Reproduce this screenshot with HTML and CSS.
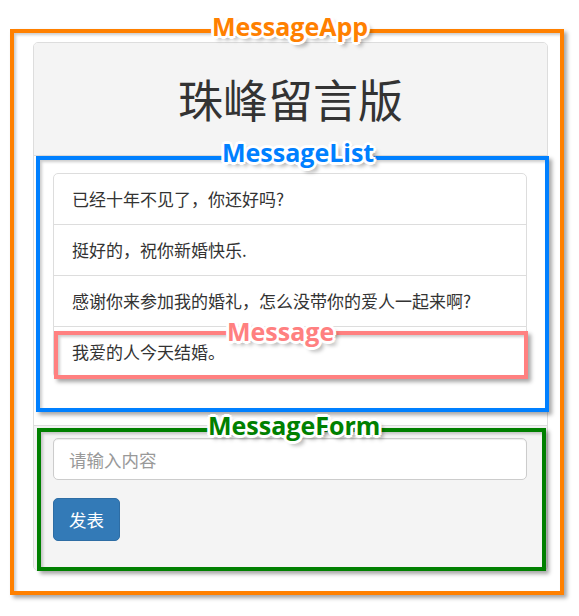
FILE: index.html
```html
<!DOCTYPE html>
<html>
<head>
    <meta charset="utf-8">
    <title>珠峰留言版</title>
    <link rel="stylesheet" href="styles.css">
</head>
<body>
    <div class="stage">
        <div class="panel">
            <div class="panel-heading">
                <h1>珠峰留言版</h1>
            </div>
            <div class="panel-body">
                <ul class="list-group">
                    <li class="list-group-item">已经十年不见了，你还好吗?</li>
                    <li class="list-group-item">挺好的，祝你新婚快乐.</li>
                    <li class="list-group-item">感谢你来参加我的婚礼，怎么没带你的爱人一起来啊?</li>
                    <li class="list-group-item">我爱的人今天结婚。</li>
                </ul>
            </div>
            <div class="panel-footer">
                <form>
                    <div class="form-group">
                        <input type="text" class="form-control" placeholder="请输入内容">
                    </div>
                    <button type="button" class="btn">发表</button>
                </form>
            </div>
        </div>

        <!-- component annotations drawn over the app -->
        <div class="note note-app"></div>
        <div class="note note-list"></div>
        <div class="note note-item"></div>
        <div class="note note-form"></div>

        <span class="note-label label-app">MessageApp</span>
        <span class="note-label label-list">MessageList</span>
        <span class="note-label label-item">Message</span>
        <span class="note-label label-form">MessageForm</span>
    </div>
</body>
</html>
```

FILE: styles.css
```css
* {
    box-sizing: border-box;
}
body {
    margin: 0;
    background: #fff;
    font-family: "Noto Sans CJK SC", "Noto Sans", sans-serif;
    color: #333;
}
.stage {
    position: relative;
    width: 579px;
    height: 616px;
    padding: 42px 31px 0 33px;
}
.panel {
    width: 515px;
    border: 1px solid #ddd;
    border-radius: 5px;
    background: #fff;
    overflow: hidden;
}
.panel-heading {
    background: #f4f4f4;
    border-bottom: 1px solid #ddd;
    padding: 31px 0 31px;
}
.panel-heading h1 {
    margin: 0;
    text-align: center;
    font-size: 45px;
    font-weight: 400;
    line-height: 50px;
    color: #333;
}
.panel-body {
    padding: 17px 20px 20px 19px;
}
.list-group {
    list-style: none;
    margin: 0 0 28px;
    padding: 0;
}
.list-group-item {
    border: 1px solid #ddd;
    margin-bottom: -1px;
    padding: 12px 18px;
    font-size: 17px;
    line-height: 26px;
    background: #fff;
}
.list-group-item:first-child {
    border-radius: 5px 5px 0 0;
}
.list-group-item:last-child {
    border-radius: 0 0 5px 5px;
}
.panel-footer {
    background: #f4f4f4;
    border-top: 1px solid #ddd;
    padding: 12px 20px 29px 19px;
}
.form-group {
    margin-bottom: 18px;
}
.form-control {
    display: block;
    width: 100%;
    height: 42px;
    padding: 0 15px;
    border: 1px solid #ccc;
    border-radius: 5px;
    font-family: inherit;
    font-size: 17.5px;
    color: #555;
    background: #fff;
    box-shadow: inset 0 1px 1px rgba(0,0,0,0.075);
    outline: none;
}
.form-control::placeholder {
    color: #999;
}
.btn {
    display: block;
    width: 67px;
    height: 43px;
    padding: 0;
    border: 1px solid #2e6da4;
    border-radius: 5px;
    background: #337ab7;
    color: #fff;
    font-family: inherit;
    font-size: 17.5px;
    cursor: pointer;
}

/* annotation boxes */
.note {
    position: absolute;
    border: 4px solid;
    box-shadow: 3px 3px 4px rgba(0,0,0,0.35), inset 2px 2px 3px rgba(0,0,0,0.2);
}
.note-app {
    left: 10px;
    top: 29px;
    width: 554px;
    height: 566px;
    border-color: #ff8000;
}
.note-list {
    left: 36px;
    top: 156px;
    width: 513px;
    height: 256px;
    border-color: #0080ff;
}
.note-item {
    left: 54px;
    top: 331px;
    width: 474px;
    height: 48px;
    border-color: #ff8080;
}
.note-form {
    left: 37px;
    top: 428px;
    width: 509px;
    height: 143px;
    border-color: #008000;
}
.note-label {
    position: absolute;
    font-family: "Open Sans", sans-serif;
    font-weight: 700;
    font-size: 25px;
    line-height: 1;
    white-space: nowrap;
    text-shadow:
        3px 0 0 #fff, -3px 0 0 #fff, 0 3px 0 #fff, 0 -3px 0 #fff,
        2px 2px 0 #fff, -2px -2px 0 #fff, 2px -2px 0 #fff, -2px 2px 0 #fff,
        4px 4px 4px rgba(0,0,0,0.4);
}
.label-app {
    left: 212px;
    top: 14px;
    color: #ff8000;
}
.label-list {
    left: 222px;
    top: 140px;
    color: #0080ff;
}
.label-item {
    left: 227px;
    top: 319px;
    color: #ff8080;
}
.label-form {
    left: 208px;
    top: 413px;
    color: #008000;
}
```
